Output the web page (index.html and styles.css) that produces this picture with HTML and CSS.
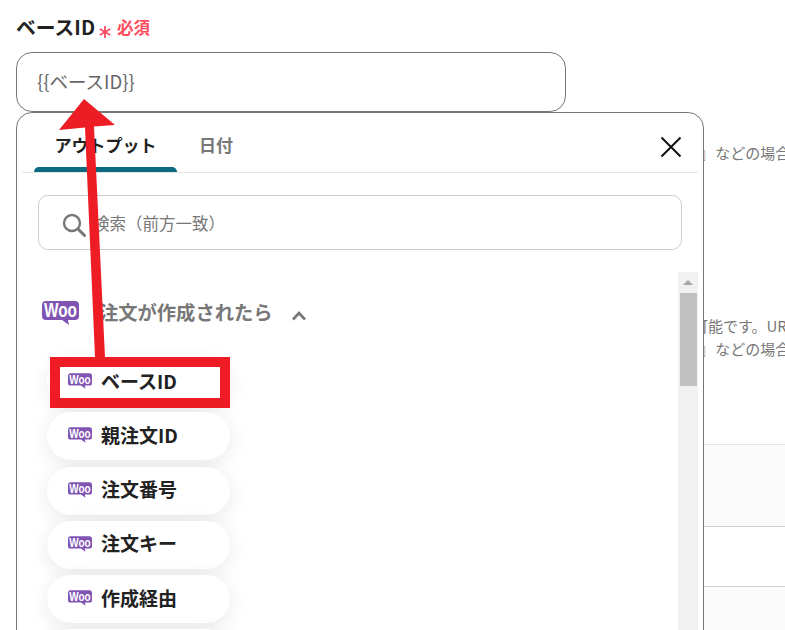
FILE: index.html
```html
<!DOCTYPE html>
<html lang="ja">
<head>
<meta charset="utf-8">
<title>ベースID</title>
<link rel="stylesheet" href="styles.css">
</head>
<body>
<main class="page">
  <div class="label-row">
    <span class="label">ベースID</span>
    <svg class="asterisk" width="14" height="14" viewBox="0 0 14 14" aria-hidden="true"><path d="M7 1V13M1.800 4L12.200 10M12.200 4L1.800 10" stroke="#ff4d5f" stroke-width="1.800" fill="none"/></svg>
    <span class="required">必須</span>
  </div>
  <div class="field">{{ベースID}}</div>
  <p class="hint hint-first">』 などの場合</p>
  <p class="hint hint-second">可能です。UR</p>
  <p class="hint hint-third">』 などの場合</p>
  <div class="table">
    <div class="tr tr-a"></div>
    <div class="tr tr-b"></div>
    <div class="tr tr-c"></div>
  </div>

  <section class="popover">
    <div class="tabs">
      <div class="tab tab-active">アウトプット</div>
      <div class="tab">日付</div>
      <button class="close" aria-label="閉じる">
        <svg width="22" height="22" viewBox="0 0 22 22"><path d="M1.500 1.500L20.500 20.500M20.500 1.500L1.500 20.500" stroke="#111" stroke-width="2" fill="none"/></svg>
      </button>
    </div>
    <div class="search">
      <svg class="search-icon" width="24" height="24" viewBox="0 0 24 24"><circle cx="10" cy="10" r="8" fill="none" stroke="#777" stroke-width="2.400"/><path d="M16 16L22.500 22.500" stroke="#777" stroke-width="3" stroke-linecap="round"/></svg>
      <span class="placeholder">検索（前方一致）</span>
    </div>
    <div class="results">
      <div class="list">
        <div class="group">
          <svg class="woo-large" viewBox="0 0 37 24"><path class="woo-bubble" d="M4 0H33A4 4 0 0 1 37 4V15A4 4 0 0 1 33 19H26L27 24L20 19H4A4 4 0 0 1 0 15V4A4 4 0 0 1 4 0Z"/><text class="woo-text" x="18.500" y="16" text-anchor="middle" textLength="33" lengthAdjust="spacingAndGlyphs">Woo</text></svg>
          <span class="group-title">注文が作成されたら</span>
          <svg class="chevron" width="16" height="11" viewBox="0 0 16 11"><path d="M2 9.500L8 3L14 9.500" fill="none" stroke="#777" stroke-width="2.600"/></svg>
        </div>
        <div class="pills">
          <div class="pill"><svg class="woo-small" viewBox="0 0 37 24"><path class="woo-bubble" d="M4 0H33A4 4 0 0 1 37 4V15A4 4 0 0 1 33 19H26L27 24L20 19H4A4 4 0 0 1 0 15V4A4 4 0 0 1 4 0Z"/><text class="woo-text" x="18.500" y="16" text-anchor="middle" textLength="33" lengthAdjust="spacingAndGlyphs">Woo</text></svg><span class="pill-text">ベースID</span></div>
          <div class="pill"><svg class="woo-small" viewBox="0 0 37 24"><path class="woo-bubble" d="M4 0H33A4 4 0 0 1 37 4V15A4 4 0 0 1 33 19H26L27 24L20 19H4A4 4 0 0 1 0 15V4A4 4 0 0 1 4 0Z"/><text class="woo-text" x="18.500" y="16" text-anchor="middle" textLength="33" lengthAdjust="spacingAndGlyphs">Woo</text></svg><span class="pill-text">親注文ID</span></div>
          <div class="pill"><svg class="woo-small" viewBox="0 0 37 24"><path class="woo-bubble" d="M4 0H33A4 4 0 0 1 37 4V15A4 4 0 0 1 33 19H26L27 24L20 19H4A4 4 0 0 1 0 15V4A4 4 0 0 1 4 0Z"/><text class="woo-text" x="18.500" y="16" text-anchor="middle" textLength="33" lengthAdjust="spacingAndGlyphs">Woo</text></svg><span class="pill-text">注文番号</span></div>
          <div class="pill"><svg class="woo-small" viewBox="0 0 37 24"><path class="woo-bubble" d="M4 0H33A4 4 0 0 1 37 4V15A4 4 0 0 1 33 19H26L27 24L20 19H4A4 4 0 0 1 0 15V4A4 4 0 0 1 4 0Z"/><text class="woo-text" x="18.500" y="16" text-anchor="middle" textLength="33" lengthAdjust="spacingAndGlyphs">Woo</text></svg><span class="pill-text">注文キー</span></div>
          <div class="pill"><svg class="woo-small" viewBox="0 0 37 24"><path class="woo-bubble" d="M4 0H33A4 4 0 0 1 37 4V15A4 4 0 0 1 33 19H26L27 24L20 19H4A4 4 0 0 1 0 15V4A4 4 0 0 1 4 0Z"/><text class="woo-text" x="18.500" y="16" text-anchor="middle" textLength="33" lengthAdjust="spacingAndGlyphs">Woo</text></svg><span class="pill-text">作成経由</span></div>
          <div class="pill"></div>
        </div>
      </div>
      <div class="scrollbar">
        <div class="scroll-up"></div>
        <div class="scroll-thumb"></div>
      </div>
    </div>
  </section>

  <svg class="annotation" width="785" height="630" viewBox="0 0 785 630" aria-hidden="true">
    <path fill="#ee1c25" d="M84 99L115 125L94 126.500L105 357H95L85 127.500L59 130Z"/>
    <rect x="55" y="362" width="170" height="41" fill="none" stroke="#ee1c25" stroke-width="10"/>
  </svg>
</main>
</body>
</html>
```
FILE: styles.css
```css
* { box-sizing: border-box; }
html, body { margin: 0; padding: 0; }
body {
  height: 630px;
  overflow: hidden;
  background: #fff;
  font-family: "Noto Sans CJK JP", "Noto Sans", sans-serif;
  color: #222;
}
.woo-bubble { fill: #7f54b3; }
.woo-text {
  font-family: "Liberation Sans", sans-serif;
  font-size: 20px;
  font-weight: 700;
  fill: #fff;
}
.page {
  position: relative;
  height: 630px;
  overflow: hidden;
  padding: 16px 0 0 16px;
}
.label-row { display: flex; align-items: center; height: 24px; }
.label { font-size: 19.800px; font-weight: 700; line-height: 24px; margin-top: -2px; }
.asterisk { margin: 7px 0 0 3px; }
.required { margin: -2px 0 0 5px; color: #ff4d5f; font-size: 16.500px; font-weight: 700; line-height: 24px; }
.field {
  margin-top: 12px;
  width: 550px;
  height: 60px;
  padding: 0 20px 2px;
  display: flex;
  align-items: center;
  border: 1px solid #777;
  border-radius: 16px;
  color: #666;
  font-size: 18.500px;
}
.hint {
  margin: 0;
  width: 769px;
  height: 23px;
  color: #777;
  font-size: 15px;
  line-height: 23px;
  white-space: nowrap;
}
.hint-first { margin-top: 29px; padding-left: 683px; word-spacing: -2px; }
.hint-second { margin-top: 150px; padding-left: 677px; }
.hint-third { padding-left: 683px; word-spacing: -2px; }
.table { margin: 84px 0 0 688px; }
.tr-a { height: 82px; background: #fafafa; border-top: 1px solid #e5e5e5; }
.tr-b { height: 60px; background: #fff; border-top: 1px solid #cfd1d6; }
.tr-c { height: 60px; background: #fafafa; border-top: 1px solid #cfd2d6; }
.popover {
  position: absolute;
  left: 16px;
  top: 112px;
  width: 688px;
  height: 600px;
  padding: 0 5px;
  background: #fff;
  border: 1px solid #777;
  border-radius: 16px;
}
.tabs {
  position: relative;
  display: flex;
  height: 60px;
  padding-left: 12px;
  border-bottom: 1px solid #e5e5e5;
}
.tab {
  position: relative;
  width: 143px;
  padding-top: 19px;
  text-align: center;
  color: #777;
  font-size: 17px;
  font-weight: 700;
  line-height: 26px;
}
.tab + .tab { width: auto; margin-left: 22px; }
.tab-active { color: #222; }
.tab-active::after {
  content: "";
  position: absolute;
  left: 0;
  right: 0;
  bottom: 0;
  height: 5px;
  background: #0b6a80;
  border-radius: 5px 5px 0 0;
}
.close {
  position: absolute;
  right: 16px;
  top: 23px;
  width: 22px;
  height: 22px;
  padding: 0;
  border: 0;
  background: none;
}
.close svg { display: block; }
.search {
  position: relative;
  margin: 22px 16px 0;
  height: 55px;
  display: flex;
  align-items: center;
  padding-left: 54px;
  border: 1px solid #ccc;
  border-radius: 10px;
}
.search-icon { position: absolute; left: 23px; top: 17px; }
.placeholder { color: #777; font-size: 16.500px; }
.results {
  display: flex;
  justify-content: space-between;
  margin-top: 22px;
  height: 520px;
}
.list { padding: 29px 0 0 20px; }
.group { display: flex; align-items: center; height: 24px; }
.woo-large { width: 37px; height: 24px; }
.group-title { margin: -2px 0 0 20px; color: #777; font-size: 19.300px; font-weight: 700; line-height: 24px; }
.chevron { margin: 5px 0 0 18px; }
.pills { display: flex; flex-direction: column; gap: 6.250px; margin: 33px 0 0 5px; }
.pill {
  flex: none;
  display: flex;
  align-items: center;
  width: 183px;
  height: 48px;
  padding-left: 21px;
  background: #fff;
  border-radius: 24px;
  box-shadow: 0 4px 20px rgba(0, 0, 0, .09);
  font-size: 19px;
  font-weight: 700;
}
.pill-text { margin-top: -4px; }
.woo-small { width: 24px; height: 16px; margin: 0 9px 2px 0; }
.scrollbar {
  position: relative;
  width: 20px;
  background: #f1f1f1;
}
.scroll-up {
  position: absolute;
  left: 5px;
  top: 8px;
  border: 5px solid transparent;
  border-top: 0;
  border-bottom: 5px solid #a8a8a8;
}
.scroll-thumb {
  position: absolute;
  left: 2px;
  top: 21px;
  width: 17px;
  height: 93px;
  background: #c1c1c1;
}
.annotation { position: absolute; left: 0; top: 0; }
```
